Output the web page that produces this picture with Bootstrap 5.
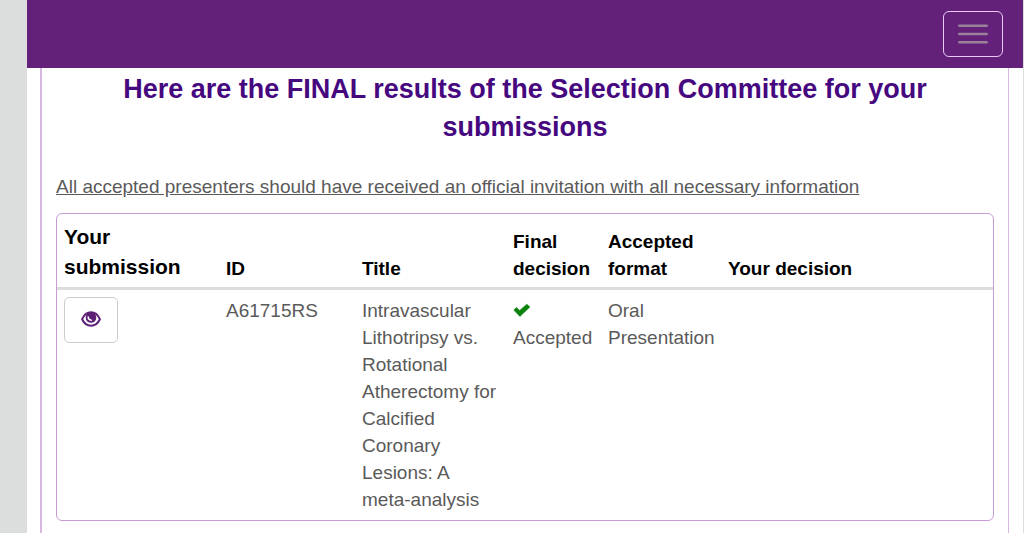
<!DOCTYPE html>
<html lang="en">
<head>
<meta charset="utf-8">
<meta name="viewport" content="width=device-width, initial-scale=1">
<title>Submission results</title>
<link href="https://cdn.jsdelivr.net/npm/bootstrap@5.3.0/dist/css/bootstrap.min.css" rel="stylesheet">
<style>
  body { font-family: "Liberation Sans", Arial, sans-serif; font-size: 19px; line-height: 27px; color: #5a5a5a; background: #dcdedd; }
  .page-shell { margin-left: 27px; margin-right: 1px; background: #fff; }
  .site-bar { background: #632179; height: 68px; padding: 0 20px; }
  .menu-toggle { width: 60px; height: 46px; padding: 0; border: 1px solid #e9c8f5; border-radius: 6px; display: flex; align-items: center; justify-content: center; }
  .results-panel { margin: 0 14px 0 13px; padding: 2px 14px 16px; border: solid #d6b8e0; border-width: 0 1px 0 2px; }
  .results-heading { color: #46087f; font-size: 27px; line-height: 38px; margin-bottom: 27px; }
  .results-box { border: 1px solid #c79bd6; border-radius: 6px; margin-top: 13px; }
  .results-table { table-layout: fixed; --bs-table-color: #5a5a5a; --bs-table-bg: transparent; color: #5a5a5a; }
  .results-table > :not(caption) > * > * { padding: 7px 4px 7px 7px; border: 0; }
  .results-table > thead > tr > th { color: #000; vertical-align: bottom; padding: 8px 4px 5px 7px; border-bottom: 3px solid #dcdcdc; }
  .results-table > thead > tr > .first-head { font-size: 21px; line-height: 30px; }
  .col-submission { width: 162px; }
  .col-id { width: 136px; }
  .col-title { width: 151px; }
  .col-final { width: 95px; }
  .col-format { width: 120px; }
  .view-btn { width: 54px; height: 46px; padding: 0 0 3px; border: 1px solid #ccc; border-radius: 5px; background: #fff; display: flex; align-items: center; justify-content: center; }
</style>
</head>
<body>
<div class="page-shell min-vh-100 d-flex flex-column">
  <nav class="site-bar navbar d-flex justify-content-end">
    <button class="menu-toggle navbar-toggler" type="button" aria-label="Toggle navigation">
      <svg width="30" height="22" viewBox="0 0 30 22" stroke="#988199" stroke-width="2.6" stroke-linecap="round" aria-hidden="true"><path d="M1.3 2.8H28.7M1.3 11H28.7M1.3 19.2H28.7"/></svg>
    </button>
  </nav>
  <main class="results-panel flex-grow-1">
    <h1 class="results-heading fw-bold text-center">Here are the FINAL results of the Selection Committee for your submissions</h1>
    <p class="text-decoration-underline mb-0">All accepted presenters should have received an official invitation with all necessary information</p>
    <div class="results-box">
      <table class="results-table table mb-0">
        <colgroup>
          <col class="col-submission"><col class="col-id"><col class="col-title"><col class="col-final"><col class="col-format"><col>
        </colgroup>
        <thead>
          <tr>
            <th scope="col" class="first-head">Your submission</th>
            <th scope="col">ID</th>
            <th scope="col">Title</th>
            <th scope="col">Final decision</th>
            <th scope="col">Accepted format</th>
            <th scope="col">Your decision</th>
          </tr>
        </thead>
        <tbody>
          <tr>
            <td>
              <button class="view-btn" type="button" aria-label="View submission">
                <svg width="20" height="16" viewBox="0 0 20 16" aria-hidden="true"><path d="M1.1 8.2C5.2 -1 14.8 -1 18.9 8.2C14.8 16.8 5.2 16.8 1.1 8.2Z" fill="#fff" stroke="#5d2074" stroke-width="2" stroke-linejoin="round"/><circle cx="10" cy="6.4" r="5.3" fill="#5d2074"/><path d="M7.2 6.1Q7.3 9.2 10.3 9.2" fill="none" stroke="#fff" stroke-width="1.5" stroke-linecap="round"/></svg>
              </button>
            </td>
            <td>A61715RS</td>
            <td>Intravascular Lithotripsy vs. Rotational Atherectomy for Calcified Coronary Lesions: A meta-analysis</td>
            <td><svg class="d-inline-block align-baseline" width="18" height="14" viewBox="0 0 18 14" role="img" aria-label="Accepted"><path d="M.8 7.1 3.5 4.4 6.7 7.4 13.8 1.2 16.9 3.9 6.9 13.4Z" fill="#0a820c" stroke="#0a820c" stroke-width=".6" stroke-linejoin="round"/></svg><br>Accepted</td>
            <td>Oral Presentation</td>
            <td></td>
          </tr>
        </tbody>
      </table>
    </div>
  </main>
</div>
<script src="https://cdn.jsdelivr.net/npm/bootstrap@5.3.0/dist/js/bootstrap.bundle.min.js"></script>
</body>
</html>
